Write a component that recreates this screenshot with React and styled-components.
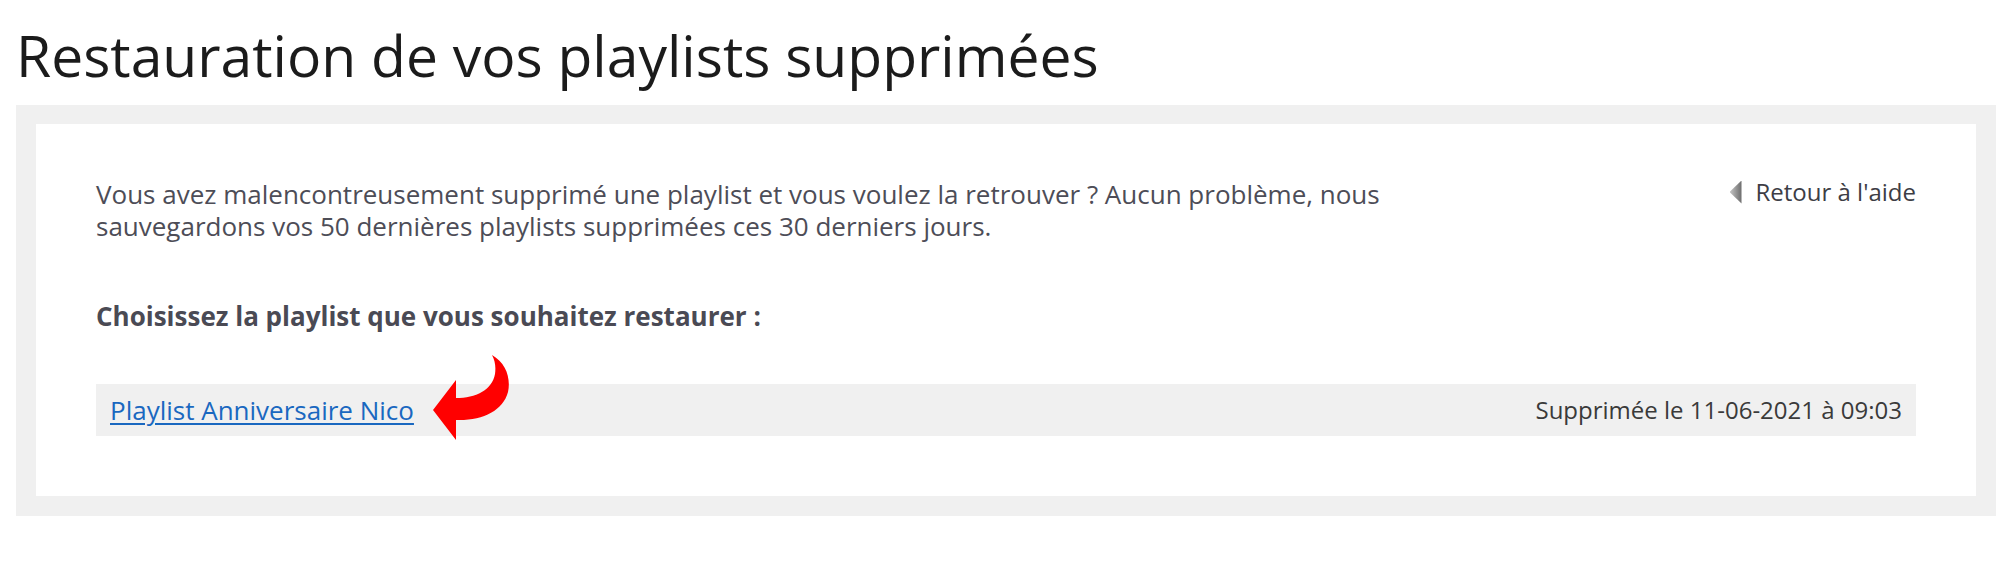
import React from 'react'
import styled, { createGlobalStyle } from 'styled-components'

const GlobalStyle = createGlobalStyle`
  body {
    margin: 0;
    background: #fff;
    font-family: "Open Sans", "Noto Sans", sans-serif;
  }
`

const Page = styled.div`
  padding: 0 18px 56px 16px;
`

const Title = styled.h1`
  margin: 17px 0 12px;
  font-size: 57px;
  line-height: 76px;
  font-weight: 400;
  color: #1b1b1b;
`

const Frame = styled.section`
  background: #f0f0f0;
  padding: 19px 20px 20px;
`

const Card = styled.div`
  background: #fff;
  padding: 54px 60px 60px;
  font-size: 26px;
  line-height: 32px;
  color: #4d4d57;
`

const Intro = styled.div`
  display: flex;
  justify-content: space-between;
  align-items: flex-start;
  gap: 40px;
`

const Text = styled.p`
  margin: 0;
  max-width: 1320px;
`

const BackLink = styled.a`
  display: flex;
  align-items: center;
  gap: 14px;
  flex-shrink: 0;
  font-size: 24px;
  color: #3d3d45;
  text-decoration: none;
  margin-top: -2px;
`

const Triangle = styled.span`
  width: 12px;
  height: 23px;
  background: linear-gradient(to right, #c4c4c4, #6a6a6a);
  clip-path: polygon(0 50%, 100% 0, 100% 100%);
`

const Prompt = styled.p`
  margin: 58px 0 52px;
  font-weight: 700;
  color: #4a4a54;
`

const Row = styled.div`
  position: relative;
  display: flex;
  justify-content: space-between;
  align-items: center;
  background: #f0f0f0;
  padding: 10px 14px;
`

const PlaylistLink = styled.a`
  color: #1a68c0;
  text-decoration: underline;
  text-underline-offset: 3px;
  text-decoration-thickness: 2px;
`

const DeletedAt = styled.span`
  font-size: 24px;
  color: #3a3a3a;
`

const Pointer = styled.svg`
  position: absolute;
  left: 324px;
  top: -34px;
  width: 100px;
  height: 95px;
`

export default function App() {
  return (
    <>
      <GlobalStyle />
      <Page>
        <Title>Restauration de vos playlists supprimées</Title>
        <Frame>
          <Card>
            <Intro>
              <Text>
                Vous avez malencontreusement supprimé une playlist et vous voulez la retrouver ? Aucun problème, nous
                sauvegardons vos 50 dernières playlists supprimées ces 30 derniers jours.
              </Text>
              <BackLink href="#">
                <Triangle />
                Retour à l'aide
              </BackLink>
            </Intro>
            <Prompt>Choisissez la playlist que vous souhaitez restaurer :</Prompt>
            <Row>
              <PlaylistLink href="#">Playlist Anniversaire Nico</PlaylistLink>
              <DeletedAt>Supprimée le 11-06-2021 à 09:03</DeletedAt>
              <Pointer viewBox="0 0 100 95">
                <path
                  d="M13 60 L36 30 L36 48 C56 48 72 40 75 24 C76 16 75 11 72 5 C86 13 91 28 88 42 C83 61 62 71 36 70 L36 90 Z"
                  fill="#ff0000"
                />
              </Pointer>
            </Row>
          </Card>
        </Frame>
      </Page>
    </>
  )
}
